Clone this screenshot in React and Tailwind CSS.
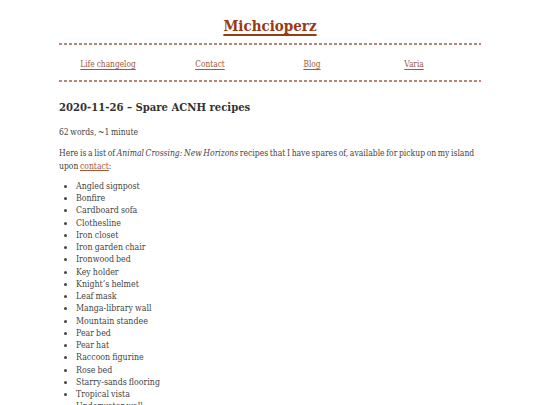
const NAV = ['Life changelog', 'Contact', 'Blog', 'Varia']

const RECIPES = [
  'Angled signpost',
  'Bonfire',
  'Cardboard sofa',
  'Clothesline',
  'Iron closet',
  'Iron garden chair',
  'Ironwood bed',
  'Key holder',
  'Knight’s helmet',
  'Leaf mask',
  'Manga-library wall',
  'Mountain standee',
  'Pear bed',
  'Pear hat',
  'Raccoon figurine',
  'Rose bed',
  'Starry-sands flooring',
  'Tropical vista',
  'Underwater wall',
  'Wooden-block bed',
]

function Dashes() {
  return <div className="h-[2px] bg-[repeating-linear-gradient(90deg,#b98670_0_3px,transparent_3px_5px)]" />
}

export default function App() {
  return (
    <div className="h-[405px] overflow-hidden bg-white text-[#444] font-['DejaVu_Serif_Condensed','DejaVu_Serif',serif] font-stretch-condensed">
      <div className="w-[422px] ml-[59px]">
        {/* header */}
        <header>
          <h1 className="text-center pt-[12px] h-[43px] text-[15px] leading-[28px] font-bold">
            <a href="#" className="text-[#9a3a12] underline decoration-[1.5px] underline-offset-[3px]">Michcioperz</a>
          </h1>
          <Dashes />
          <nav className="h-[35px] flex items-center pt-[3px]">
            <div className="grid grid-cols-4 w-[408px] -ml-[2px] [word-spacing:-0.5px]">
              {NAV.map(n => (
                <a key={n} href="#" className="text-center text-[8.3px] text-[#a0583a] underline underline-offset-[2px]">{n}</a>
              ))}
            </div>
          </nav>
          <Dashes />
        </header>

        {/* post */}
        <main>
          <h2 className="mt-[15px] text-[11.2px] leading-[20px] font-bold text-[#333]">2020-11-26 – Spare ACNH recipes</h2>
          <p className="mt-[9px] text-[8.5px] leading-[12.25px] [word-spacing:-0.8px]">62 words, ~1 minute</p>
          <p className="mt-[9px] text-[8.5px] leading-[12.25px] [word-spacing:-0.8px]">
            Here is a list of <em>Animal Crossing: New Horizons</em> recipes that I have spares of, available for pickup on my island upon{' '}
            <a href="#" className="text-[#a0583a] underline">contact</a>:
          </p>
          <ul className="mt-[8px] pl-[17px] list-disc text-[8.75px] leading-[12.25px] [word-spacing:-0.4px]">
            {RECIPES.map(r => (
              <li key={r}>{r}</li>
            ))}
          </ul>
        </main>
      </div>
    </div>
  )
}
